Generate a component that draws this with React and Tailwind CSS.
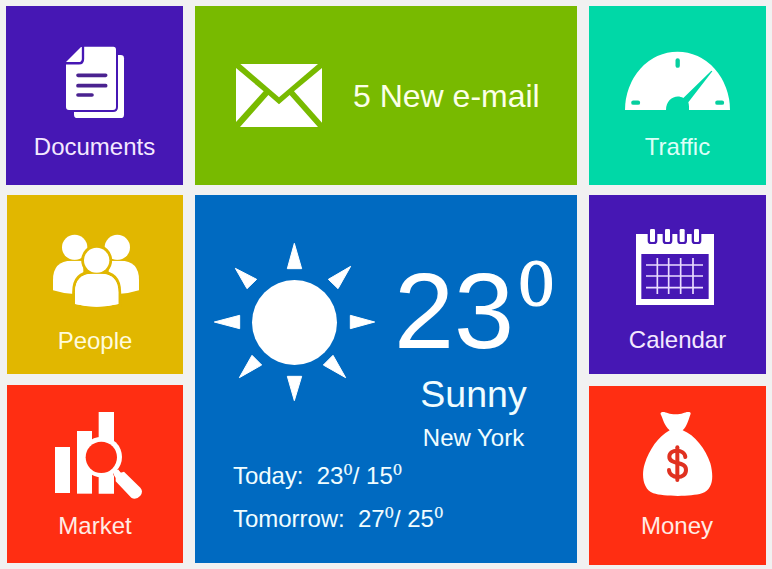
const Tile = ({ className, labelClass, label, children }) => (
  <section className={`flex flex-col items-center ${className}`}>
    {children}
    <h2 className={`text-2xl leading-6 whitespace-nowrap ${labelClass}`}>{label}</h2>
  </section>
);

const DocumentsIcon = () => (
  <svg viewBox="195 138 180 219" className="mt-10 ml-px h-[73px] w-[60px] shrink-0" fill="white">
    <rect x="222" y="165" width="150" height="189" rx="10" />
    <path d="M250 140H340Q348 140 348 149V321Q348 330 339 330H207Q198 330 198 321V192H238Q250 192 250 180Z" stroke="#4617b4" strokeWidth="12" paintOrder="stroke" />
    <path d="M198 186L243 141H246V177Q246 186 237 186Z" />
    <path d="M195 190H237Q249 190 249 177V138" fill="none" stroke="#4617b4" strokeWidth="7" />
    <g stroke="#4a2290" strokeWidth="11" strokeLinecap="round">
      <path d="M234 226H317M234 257H317M234 285H276" />
    </g>
  </svg>
);

const MailIcon = () => (
  <svg viewBox="138 189 258 195" className="h-[65px] w-[86px] shrink-0" fill="white">
    <path d="M151 192H384L267 292Z" />
    <path d="M138 204L221 274L138 366Z" />
    <path d="M396 204L312 274L396 368Z" />
    <path d="M150 381L235 285L267 313L299 285L384 381Z" />
  </svg>
);

const TrafficIcon = () => (
  <svg viewBox="132 153 321 180" className="mt-[45px] h-[60px] w-[107px] shrink-0">
    <path d="M135 330A157.500 175 0 0 1 450 330H327C328 316 325 307 325 307L397 214L394 212L310 294C289 281 258 296 258 330Z" fill="white" />
    <g stroke="#06cf9f" strokeLinecap="round" strokeWidth="13">
      <path d="M293 181V197M160 308H174M412 308H426" />
    </g>
  </svg>
);

const PeopleIcon = () => (
  <svg viewBox="156 132 264 222" className="mt-[39px] ml-0.5 h-[74px] w-[88px] shrink-0" fill="white">
    <circle cx="224" cy="172" r="38" />
    <circle cx="352" cy="172" r="38" />
    <path d="M159 301V270Q159 212 215 212H250V312H222Q190 311 159 301Z" />
    <path d="M417 301V270Q417 212 361 212H326V312H354Q386 311 417 301Z" />
    <path d="M190 211H250M326 211H386" stroke="#e1b700" strokeWidth="2.500" />
    <g stroke="#e1b700" strokeWidth="17" paintOrder="stroke">
      <path d="M225 342V307Q225 251 278 251H301Q355 251 355 307V342Q290 358 225 342Z" />
      <circle cx="290" cy="211" r="38" />
    </g>
    <path d="M225 342V307Q225 251 278 251H301Q355 251 355 307V342Q290 358 225 342Z" />
    <path d="M260 249.500H320" stroke="#e1b700" strokeWidth="2.500" />
  </svg>
);

const CalendarIcon = () => (
  <svg viewBox="165 114 240 234" className="mt-[33px] -ml-[5px] h-[78px] w-20 shrink-0">
    <path d="M168 132H402V345H168Z" fill="white" />
    <path d="M184 192H386V327H184Z" fill="#4617b4" />
    <g fill="#4617b4">
      <path d="M203 129H232V152Q232 162 222 162H213Q203 162 203 152Z" />
      <path d="M248 129H277V152Q277 162 267 162H258Q248 162 248 152Z" />
      <path d="M292 129H321V152Q321 162 311 162H302Q292 162 292 152Z" />
      <path d="M335 129H364V152Q364 162 354 162H345Q335 162 335 152Z" />
    </g>
    <g fill="white">
      <rect x="210" y="117" width="15" height="39" rx="4" />
      <rect x="255" y="117" width="15" height="39" rx="4" />
      <rect x="299" y="117" width="15" height="39" rx="4" />
      <rect x="342" y="117" width="15" height="39" rx="4" />
    </g>
    <g stroke="#eadcff" strokeWidth="5">
      <path d="M198 225H369M198 258H369M198 293H369M232 204V312M266 204V312M302 204V312M339 204V312" />
    </g>
  </svg>
);

const MarketIcon = () => (
  <svg viewBox="162 93 267 267" className="mt-[26px] ml-[7px] size-[89px] shrink-0" fill="white">
    <path d="M165 201H210V339H165Z" />
    <path d="M231 153H276V341H231Z" />
    <path d="M296 96H342V341H296Z" />
    <circle cx="305" cy="231" r="61" />
    <path d="M340 282L354 268L362 278L372 275L421 323Q431 334 421 347Q407 362 394 353L347 304V294Z" stroke="#ff2e12" strokeWidth="3" paintOrder="stroke" />
    <path d="M335 273L346 263L366 282L350 293Z" />
    <circle cx="304" cy="232" r="47" fill="#ff2e12" />
  </svg>
);

const MoneyIcon = () => (
  <svg viewBox="186 93 213 258" className="mt-[25px] h-[86px] w-[71px] shrink-0">
    <path d="M246 96C257 94 266 103 287 103C308 103 315 94 328 96Q334 98 331 104C325 120 321 139 308 151C344 165 377 207 391 250C402 291 399 328 366 340C331 351 252 350 220 340C190 329 183 287 194 252C208 209 234 170 269 151C253 138 249 117 242 103Q240 98 246 96Z" fill="white" />
    <g fill="none" stroke="#e03120" strokeWidth="12" strokeLinecap="round" strokeLinejoin="round">
      <path d="M316 231C314 207 268 205 268 230C268 257 318 241 318 270C318 300 268 296 267 270" />
      <path d="M292 202V300" />
    </g>
  </svg>
);

const SunIcon = () => (
  <svg viewBox="39 36 489 480" className="mt-[47px] ml-[18px] h-40 w-[163px] shrink-0" fill="white">
    <circle cx="283.500" cy="277.500" r="127.500" />
    <g stroke="white" strokeWidth="3" strokeLinejoin="round">
      <path d="M283 40L305 116H262Z" />
      <path d="M283 512L305 439H262Z" />
      <path d="M43 276L119 256V296Z" />
      <path d="M524 276L451 256V296Z" />
      <path d="M106 115L170 148L141 176Z" />
      <path d="M452 109L385 148L414 176Z" />
      <path d="M118 443L156 376L185 405Z" />
      <path d="M437 443L399 376L370 405Z" />
    </g>
  </svg>
);

const Degree = () => (
  <span className="align-[8.500px] font-['DejaVu_Serif',serif] text-[15px] leading-none [-webkit-text-stroke:0.2px]">0</span>
);

export default function App() {
  return (
    <main className="flex h-[569px] w-[772px] gap-3 overflow-hidden bg-[#f1f1f1] pt-1.5 pl-1.5 font-['Liberation_Sans',Arial,sans-serif] text-white">
      <div className="flex w-[177px] shrink-0 flex-col items-end">
        <Tile className="h-[179px] w-[177px] bg-[#4617b4]" label="Documents" labelClass="mt-4 text-[#f4e9ff]">
          <DocumentsIcon />
        </Tile>
        <Tile className="mt-2.5 h-[179px] w-44 bg-[#e1b700]" label="People" labelClass="mt-[21px] text-[#fffbdc]">
          <PeopleIcon />
        </Tile>
        <Tile className="mt-[11px] h-[178px] w-44 bg-[#ff2e12]" label="Market" labelClass="mt-3.5 text-[#ffebe4]">
          <MarketIcon />
        </Tile>
      </div>

      <div className="flex w-[382px] shrink-0 flex-col gap-2.5">
        <section className="flex h-[179px] items-center bg-[#78ba00] pl-[41px]">
          <MailIcon />
          <h2 className="ml-[31px] text-[32px] leading-8 whitespace-nowrap text-[#fcffe8]">5 New e-mail</h2>
        </section>

        <section className="h-[368px] bg-[#006ac1] text-[#f0fdff]">
          <div className="flex h-[268px]">
            <SunIcon />
            <div className="ml-[18px] flex w-[159px] shrink-0 flex-col items-center">
              <div className="mt-[62px] flex w-full items-start text-[108px] leading-[107px] text-white">
                23
                <span className="-mt-0.5 ml-[3px] font-['DejaVu_Serif',serif] text-[60px] leading-[60px] [-webkit-text-stroke:1.2px]">0</span>
              </div>
              <p className="mt-[11px] text-[37.500px] leading-[38px]">Sunny</p>
              <p className="mt-[13px] text-2xl leading-6">New York</p>
            </div>
          </div>
          <div className="flex flex-col gap-[19px] pl-[38px] text-2xl leading-6 tracking-[-0.04px] whitespace-pre">
            <p className="h-6">{"Today:  23"}<Degree />{"/ 15"}<Degree /></p>
            <p className="h-6">{"Tomorrow:  27"}<Degree />{"/ 25"}<Degree /></p>
          </div>
        </section>
      </div>

      <div className="flex w-[177px] shrink-0 flex-col">
        <Tile className="h-[179px] bg-[#00d8a7]" label="Traffic" labelClass="mt-6 text-[#dcfff7]">
          <TrafficIcon />
        </Tile>
        <Tile className="mt-2.5 h-[179px] bg-[#4617b4]" label="Calendar" labelClass="mt-[22px] text-[#f4e9ff]">
          <CalendarIcon />
        </Tile>
        <Tile className="mt-3 h-[179px] bg-[#ff2e12]" label="Money" labelClass="mt-[17px] -ml-px text-[#ffebe4]">
          <MoneyIcon />
        </Tile>
      </div>
    </main>
  );
}
